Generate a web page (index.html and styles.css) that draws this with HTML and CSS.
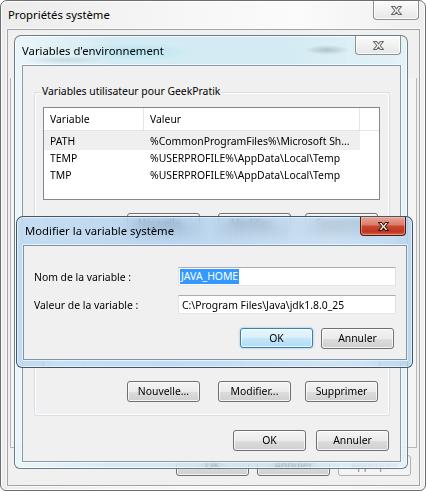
FILE: index.html
```html
<!DOCTYPE html>
<html lang="fr">
<head>
<meta charset="utf-8">
<title>Propriétés système</title>
<link rel="stylesheet" href="styles.css">
</head>
<body>
<div class="desk">

  <section class="win outer">
    <header class="titlebar">
      <span class="title">Propriétés système</span>
      <span class="close"><svg class="xg" width="13" height="11" viewBox="0 0 13 11"><path d="M1.5 1.5H4.6L6.5 3.9L8.4 1.5H11.5L8.1 5.5L11.5 9.5H8.4L6.5 7.1L4.6 9.5H1.5L4.9 5.5Z"/></svg></span>
    </header>
    <div class="client outer-client">
      <div class="tabpage"></div>
      <div class="btnrow outer-btns">
        <button class="btn">OK</button>
        <button class="btn">Annuler</button>
        <button class="btn disabled">Appliquer</button>
      </div>
    </div>
  </section>

  <section class="win env">
    <header class="titlebar">
      <span class="title">Variables d'environnement</span>
      <span class="close"><svg class="xg" width="13" height="11" viewBox="0 0 13 11"><path d="M1.5 1.5H4.6L6.5 3.9L8.4 1.5H11.5L8.1 5.5L11.5 9.5H8.4L6.5 7.1L4.6 9.5H1.5L4.9 5.5Z"/></svg></span>
    </header>
    <div class="client env-client">
      <div class="group">
        <span class="group-label">Variables utilisateur pour GeekPratik</span>
        <div class="list">
          <div class="lv-head"><span class="c1">Variable</span><span class="c2">Valeur</span></div>
          <div class="lv-rows">
            <div class="lv-row hot"><span class="c1">PATH</span><span class="c2">%CommonProgramFiles%\Microsoft Sh...</span></div>
            <div class="lv-row"><span class="c1">TEMP</span><span class="c2">%USERPROFILE%\AppData\Local\Temp</span></div>
            <div class="lv-row"><span class="c1">TMP</span><span class="c2">%USERPROFILE%\AppData\Local\Temp</span></div>
          </div>
        </div>
        <div class="btnrow grp-btns">
          <button class="btn b-new">Nouvelle...</button>
          <button class="btn b-mod">Modifier...</button>
          <button class="btn">Supprimer</button>
        </div>
      </div>
      <div class="group group-sys">
        <div class="list"></div>
        <div class="btnrow grp-btns">
          <button class="btn b-new">Nouvelle...</button>
          <button class="btn b-mod">Modifier...</button>
          <button class="btn">Supprimer</button>
        </div>
      </div>
      <div class="btnrow env-btns">
        <button class="btn">OK</button>
        <button class="btn">Annuler</button>
      </div>
    </div>
  </section>

  <section class="win edit">
    <header class="titlebar">
      <span class="title">Modifier la variable système</span>
      <span class="close close-red"><svg class="xg" width="13" height="11" viewBox="0 0 13 11"><path d="M1.5 1.5H4.6L6.5 3.9L8.4 1.5H11.5L8.1 5.5L11.5 9.5H8.4L6.5 7.1L4.6 9.5H1.5L4.9 5.5Z"/></svg></span>
    </header>
    <div class="client edit-client">
      <div class="field">
        <span class="flabel">Nom de la variable :</span>
        <div class="tb"><span class="sel">JAVA_HOME</span></div>
      </div>
      <div class="field">
        <span class="flabel">Valeur de la variable :</span>
        <div class="tb tb-val">C:\Program Files\Java\jdk1.8.0_25</div>
      </div>
      <div class="btnrow edit-btns">
        <button class="btn default">OK</button>
        <button class="btn">Annuler</button>
      </div>
    </div>
  </section>

</div>
</body>
</html>
```

FILE: styles.css
```css
* { box-sizing: border-box; }

html, body {
  margin: 0;
  padding: 0;
}

body {
  width: 426px;
  height: 492px;
  overflow: hidden;
  background: #ffffff;
  font-family: "Noto Sans", "Open Sans", sans-serif;
  font-size: 10.4px;
  color: #000;
}

.desk {
  position: relative;
  width: 426px;
  height: 492px;
}

/* ---------- windows ---------- */
.win {
  position: absolute;
  display: flex;
  flex-direction: column;
  border: 1px solid #6e6e6e;
  border-radius: 7px 7px 6px 6px;
}

.outer {
  left: 0;
  top: 0;
  width: 426px;
  height: 491px;
  padding: 0 5px 4px 6px;
  background: linear-gradient(90deg, #ececec 0%, #f7f7f7 45%, #fbfbfb 70%, #efefef 100%);
  box-shadow: inset 0 0 0 1px rgba(255,255,255,0.8);
}

.env {
  left: 14px;
  top: 35px;
  width: 394px;
  height: 434px;
  padding: 0 6px 6px 7px;
  border-color: rgba(70, 86, 98, 0.75);
  background:
    radial-gradient(22px 5px at 312px 14px, rgba(90,110,120,0.35), rgba(90,110,120,0) 100%),
    radial-gradient(40px 4px at 50px 24px, rgba(120,150,160,0.25), rgba(120,150,160,0) 100%),
    radial-gradient(60px 10px at 120px 16px, rgba(160,225,240,0.55), rgba(160,225,240,0) 100%),
    linear-gradient(90deg, rgba(255,255,255,0.5) 0%, rgba(255,255,255,0) 25%, rgba(255,255,255,0) 70%, rgba(255,255,255,0.35) 100%),
    rgba(190, 232, 245, 0.55);
  backdrop-filter: blur(6px);
  box-shadow: inset 0 0 0 1px rgba(255,255,255,0.7);
}

.edit {
  left: 16px;
  top: 216px;
  width: 397px;
  height: 152px;
  padding: 0 5px 7px 6px;
  border-color: rgba(45, 62, 84, 0.85);
  background:
    linear-gradient(90deg, rgba(255,255,255,0.15) 0%, rgba(255,255,255,0) 40%, rgba(255,255,255,0.25) 80%, rgba(255,255,255,0.08) 100%),
    rgba(140, 192, 238, 0.52);
  backdrop-filter: blur(6px);
  box-shadow: inset 0 0 0 1px rgba(255,255,255,0.55);
}

.titlebar {
  flex: none;
  display: flex;
  align-items: flex-start;
  justify-content: space-between;
  height: 28px;
}

.env .titlebar { height: 29px; }

.title {
  align-self: center;
  font-size: 11.3px;
  line-height: 16px;
  white-space: nowrap;
}

.outer .title { padding-left: 1px; }
.edit .title { padding-left: 2px; }

.close {
  flex: none;
  width: 46px;
  height: 19px;
  display: flex;
  align-items: center;
  justify-content: center;
  border: 1px solid rgba(60, 60, 60, 0.55);
  border-top: none;
  border-radius: 0 0 4px 4px;
  background: linear-gradient(#fbfbfb 0%, #f1f1f1 50%, #e6e6e6 100%);
  box-shadow: inset 0 0 0 1px rgba(255,255,255,0.85);
}

.outer .close { margin-right: 1px; }
.edit .close { margin-right: 1px; }

.xg path {
  fill: #fbfbfb;
  stroke: #666666;
  stroke-width: 1.1;
  stroke-linejoin: round;
}

.close-red {
  border-color: #4e1a10;
  background: linear-gradient(#e9a597 0%, #da7d6d 42%, #c7472f 52%, #bf3620 82%, #d8634c 100%);
  box-shadow: inset 0 0 0 1px rgba(255,210,200,0.45);
}

.close-red .xg path {
  fill: #ffffff;
  stroke: #3f1208;
}

/* ---------- client areas ---------- */
.client {
  flex: 1;
  display: flex;
  flex-direction: column;
  background: #f0f0f0;
  border: 1px solid #8e9aa3;
  box-shadow: 0 0 0 1px rgba(255,255,255,0.6);
}

.outer-client { border-color: #a3a3a3; }
.edit-client { border-color: #7f93ab; }

/* ---------- outer (mostly hidden) ---------- */
.tabpage {
  flex: 1;
  margin: 48px 2px 0;
  border: 1px solid #b4b8be;
  border-top: none;
  background: #f4f4f4;
}

.btnrow {
  display: flex;
  justify-content: flex-end;
}

.outer-btns {
  gap: 8px;
  margin: 7px 8px 9px 0;
}

/* ---------- buttons ---------- */
.btn {
  flex: none;
  width: 73px;
  height: 21px;
  padding: 0;
  margin: 0;
  font: inherit;
  line-height: 19px;
  color: #000;
  border: 1px solid #707070;
  border-radius: 3px;
  background: linear-gradient(#f3f3f3 0%, #ebebeb 50%, #dddddd 52%, #cfcfcf 100%);
  box-shadow: inset 0 0 0 1px rgba(255,255,255,0.75);
}

.btn.default {
  height: 20px;
  line-height: 18px;
  border-color: #3c7fb1;
  background: linear-gradient(#e8f5fd 0%, #d8effc 50%, #c4e6f9 52%, #b2dcf4 100%);
  box-shadow: inset 0 0 0 1px rgba(255,255,255,0.7), 0 0 2px rgba(70,160,225,0.8);
}

.btn.disabled {
  color: #838383;
  border-color: #adb2b5;
  background: #f4f4f4;
  box-shadow: none;
}

/* ---------- env client content ---------- */
.env-client {
  padding-top: 26px;
}

.group {
  position: relative;
  margin: 0 10px 0 11px;
  padding: 14px 9px 13px 8px;
  border: 1px solid #d5dfe5;
  border-radius: 3px;
  box-shadow: inset 0 0 0 1px rgba(255,255,255,0.9);
}

.group-sys { margin-top: 12px; }

.group-label {
  position: absolute;
  left: 6px;
  top: -10px;
  padding: 0 1px;
  line-height: 16px;
  background: #f0f0f0;
  white-space: nowrap;
}

.list {
  height: 93px;
  border: 1px solid #828790;
  background: #ffffff;
  overflow: hidden;
}

.lv-head {
  display: flex;
  height: 23px;
  line-height: 22px;
  border-bottom: 1px solid #e5e5e5;
}

.c1, .c2 {
  flex: none;
  padding-left: 6px;
  white-space: nowrap;
  overflow: hidden;
}

.c1 { width: 100px; }
.c2 { width: 216px; }

.lv-head .c1,
.lv-head .c2 {
  border-right: 1px solid #e5e5e5;
}

.lv-row {
  display: flex;
  width: 316px;
  line-height: 17px;
}

.lv-row.hot {
  background: #efefef;
}

.lv-rows .lv-row:first-child {
  padding-top: 2px;
}

.grp-btns {
  margin: 13px 2px 0 0;
}

.b-new { margin-right: 18px; }
.b-mod { margin-right: 14px; }

.env-btns {
  gap: 10px;
  margin: 14px 11px 0 0;
}

/* ---------- edit dialog content ---------- */
.edit-client {
  padding-top: 21px;
}

.field {
  display: flex;
  align-items: center;
  padding: 0 10px;
}

.field + .field { margin-top: 9px; }

.flabel {
  flex: 1;
  white-space: nowrap;
}

.tb {
  flex: none;
  display: flex;
  align-items: center;
  width: 218px;
  height: 19px;
  padding-left: 2px;
  border: 1px solid;
  border-color: #abadb3 #dbdfe6 #e3e9ef #e2e3ea;
  background: #ffffff;
  white-space: nowrap;
  overflow: hidden;
}

.tb-val { padding-left: 3px; }

.sel {
  display: inline-block;
  line-height: 15px;
  margin-left: -1px;
  padding: 0 1px;
  background: #3399ff;
  color: #ffffff;
}

.edit-btns {
  gap: 8px;
  margin: 14px 12px 0 0;
}
```
